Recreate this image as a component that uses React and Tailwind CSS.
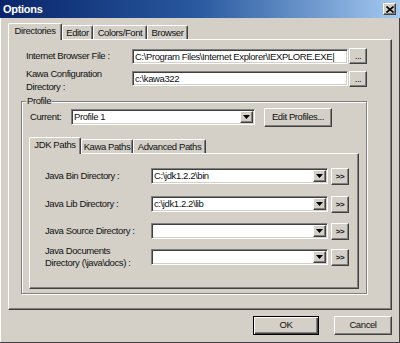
import React from "react";

const sunken =
  "bg-white border border-t-[#808080] border-l-[#808080] border-r-white border-b-white shadow-[inset_1px_1px_#404040,inset_-1px_-1px_#d4d0c8]";
const raised =
  "bg-[#d4d0c8] border border-t-white border-l-white border-r-[#404040] border-b-[#404040] shadow-[inset_-1px_-1px_#808080]";

function Arrow() {
  return (
    <svg width="7" height="4" viewBox="0 0 7 4">
      <path d="M0 0h7L3.5 4z" fill="#000" />
    </svg>
  );
}

function Combo({ className, value }) {
  return (
    <div className={`${sunken} ${className} h-[16px] p-[1px] flex`}>
      <div className="flex-1 pl-[1px] leading-[12px] whitespace-nowrap overflow-hidden">{value}</div>
      <div className={`${raised} w-[13px] flex items-center justify-center`}>
        <Arrow />
      </div>
    </div>
  );
}

function Tab({ label, selected, w }) {
  return (
    <div
      className={`${w} ${
        selected ? "h-[17px] -mb-[1px] relative z-10" : "h-[14px]"
      } bg-[#d4d0c8] border-t border-l border-r border-t-white border-l-white border-r-[#404040] shadow-[inset_-1px_0_#808080] rounded-t-[2px] flex items-start justify-center pt-[1px] leading-[12px] whitespace-nowrap`}
    >
      {label}
    </div>
  );
}

function PathRow({ label, value, mt, two }) {
  return (
    <div className={`flex items-start ${mt}`}>
      <div className={`w-[121px] pl-[15px] ${two ? "leading-[12px]" : "leading-[16px]"}`}>{label}</div>
      <Combo className={`w-[177px] ${two ? "mt-[4px]" : ""}`} value={value} />
      <div
        className={`${raised} w-[18px] h-[17px] ml-[3px] flex items-center justify-center text-[8px] font-bold leading-none tracking-[-0.5px] ${
          two ? "mt-[4px]" : ""
        }`}
      >
        &gt;&gt;
      </div>
    </div>
  );
}

export default function App() {
  return (
    <div className="w-[400px] h-[343px] overflow-hidden bg-[#d4d0c8] text-[#111] text-[9.5px] tracking-[-0.4px] font-['Liberation_Sans',Arial,sans-serif] shadow-[inset_-1px_-1px_#404040,inset_1px_0_#ffffff] flex flex-col">
      {/* Title bar */}
      <div className="h-[18px] flex items-center justify-between pl-[3px] pr-[4px] bg-gradient-to-r from-[#0a246a] via-[#2a5aa0] to-[#a6caf0]">
        <span className="text-white font-bold text-[11px] tracking-[-0.3px]">Options</span>
        <div className={`${raised} w-[13px] h-[12px] flex items-center justify-center`}>
          <svg width="8" height="7" viewBox="0 0 8 7">
            <path d="M0.5 0.5L7.5 6.5M7.5 0.5L0.5 6.5" stroke="#000" strokeWidth="1.6" />
          </svg>
        </div>
      </div>

      {/* Outer tab strip */}
      <div className="mt-[5px] ml-[8px] h-[16px] flex items-end">
        <Tab label="Directories" selected w="w-[54px]" />
        <Tab label="Editor" w="w-[31px]" />
        <Tab label="Colors/Font" w="w-[54px]" />
        <Tab label="Browser" w="w-[41px]" />
      </div>

      {/* Outer panel */}
      <div className="mx-[8px] h-[271px] border border-t-white border-l-white border-r-[#404040] border-b-[#404040] shadow-[inset_-1px_-1px_#808080] flex flex-col">
        <div className="mt-[8px] flex items-start">
          <div className="w-[123px] pl-[17px] leading-[16px]">Internet Browser File :</div>
          <div className={`${sunken} w-[216px] h-[15px] mt-[1px] pl-[2px] leading-[13px] whitespace-nowrap overflow-hidden`}>
            C:\Program Files\Internet Explorer\IEXPLORE.EXE|
          </div>
          <div className={`${raised} w-[18px] h-[16px] ml-[1px] flex items-center justify-center leading-none`}>...</div>
        </div>
        <div className="mt-[3px] flex items-start">
          <div className="w-[123px] pl-[17px] leading-[13px]">
            Kawa Configuration
            <br />
            Directory :
          </div>
          <div className={`${sunken} w-[216px] h-[15px] mt-[4px] pl-[2px] leading-[13px]`}>c:\kawa322</div>
          <div className={`${raised} w-[18px] h-[16px] mt-[4px] ml-[1px] flex items-center justify-center leading-none`}>...</div>
        </div>

        {/* Profile group */}
        <div className="relative mt-[8px] ml-[12px] w-[346px] h-[193px] border border-[#808080] shadow-[inset_1px_1px_#ffffff,1px_1px_#ffffff] flex flex-col">
          <div className="absolute left-[4px] -top-[7px] px-[1px] bg-[#d4d0c8] leading-[12px]">Profile</div>

          <div className="mt-[6px] flex items-start">
            <div className="w-[49px] pl-[8px] mt-[1px] leading-[16px]">Current:</div>
            <Combo className="w-[184px] mt-[1px]" value="Profile 1" />
            <div className={`${raised} w-[68px] h-[19px] ml-[9px] flex items-center justify-center`}>Edit Profiles...</div>
          </div>

          {/* Inner tab strip */}
          <div className="mt-[10px] ml-[7px] h-[16px] flex items-end">
            <Tab label="JDK Paths" selected w="w-[52px]" />
            <Tab label="Kawa Paths" w="w-[52px]" />
            <Tab label="Advanced Paths" w="w-[73px]" />
          </div>

          {/* Inner panel */}
          <div className="ml-[7px] w-[330px] h-[136px] border border-t-white border-l-white border-r-[#404040] border-b-[#404040] shadow-[inset_-1px_-1px_#808080] flex flex-col">
            <PathRow label="Java Bin Directory :" value="C:\jdk1.2.2\bin" mt="mt-[14px]" />
            <PathRow label="Java Lib Directory :" value="c:\jdk1.2.2\lib" mt="mt-[11px]" />
            <PathRow label="Java Source Directory :" value="" mt="mt-[10px]" />
            <PathRow
              label={
                <>
                  Java Documents
                  <br />
                  Directory (\java\docs) :
                </>
              }
              value=""
              mt="mt-[5px]"
              two
            />
          </div>
        </div>
      </div>

      {/* Buttons */}
      <div className="mt-[6px] pr-[8px] flex justify-end gap-[15px]">
        <div className="w-[66px] h-[19px] bg-[#d4d0c8] border border-black shadow-[inset_1px_1px_#ffffff,inset_-1px_-1px_#404040,inset_-2px_-2px_#808080] flex items-center justify-center">
          OK
        </div>
        <div className={`${raised} w-[58px] h-[19px] flex items-center justify-center`}>Cancel</div>
      </div>
    </div>
  );
}
